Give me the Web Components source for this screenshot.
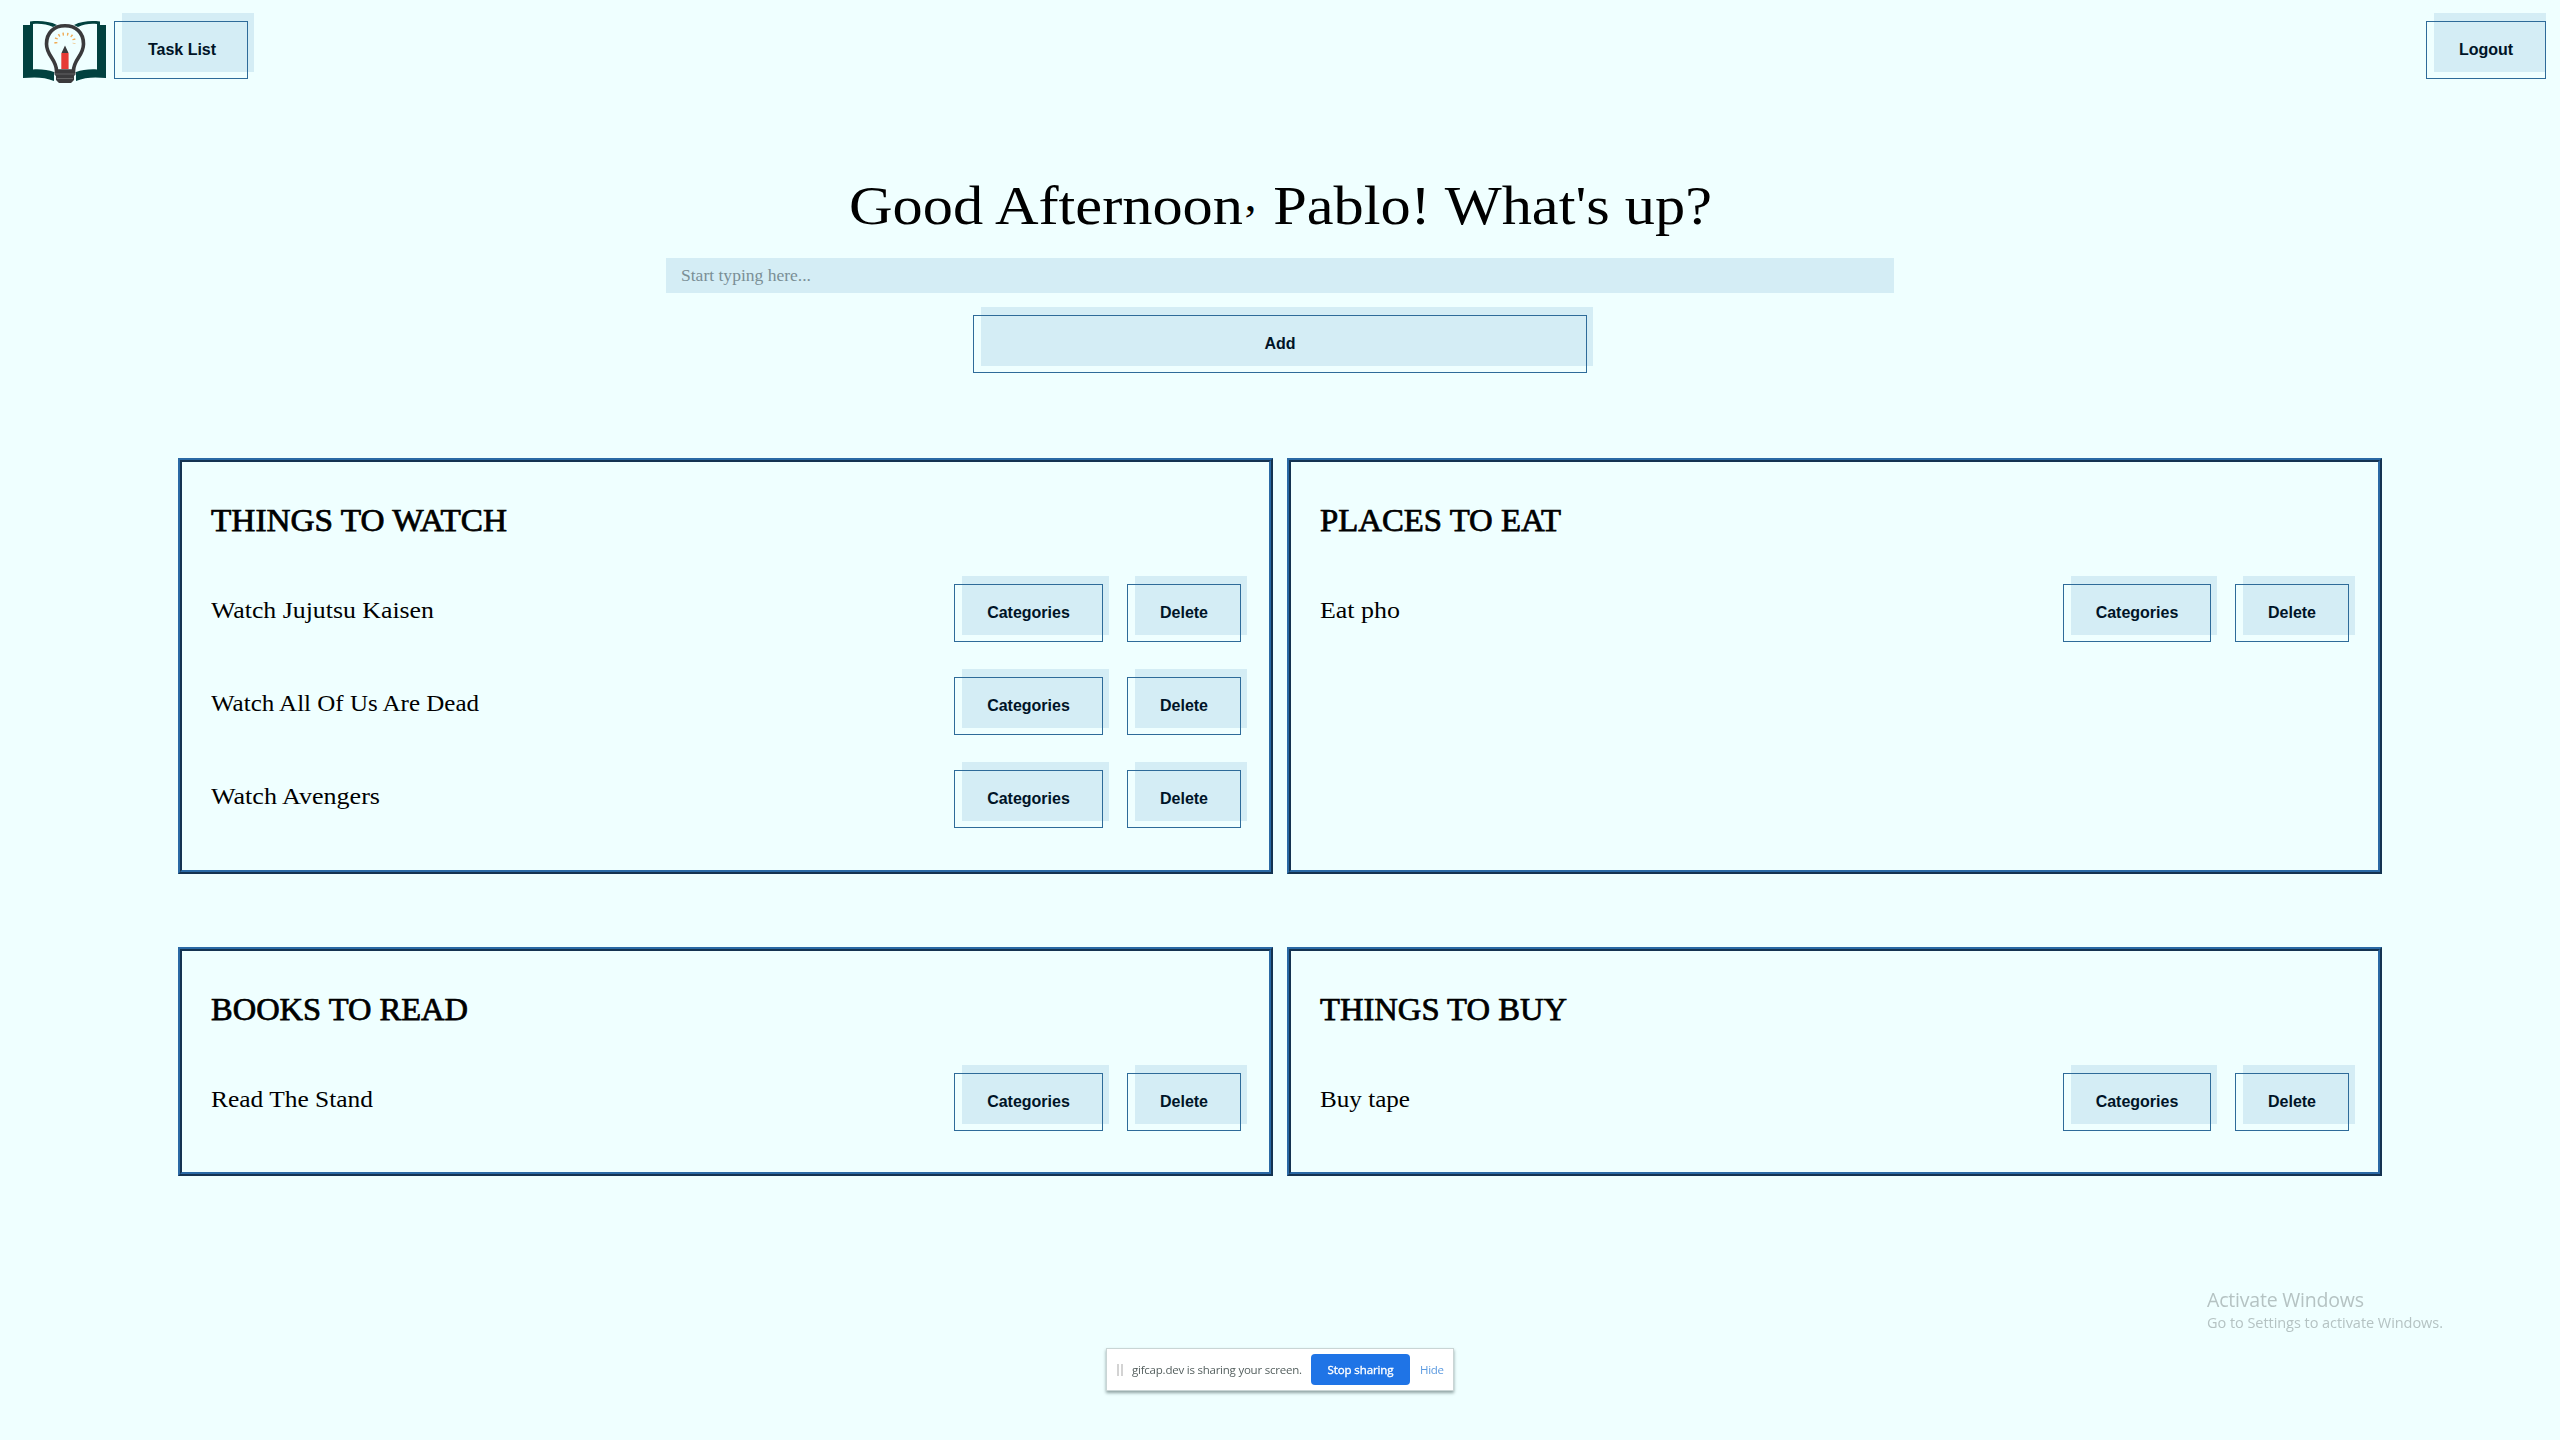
<!DOCTYPE html>
<html lang="en">
<head>
<meta charset="utf-8">
<title>Task List</title>
<style>
  html, body { margin: 0; height: 100%; }
  body { background: #efffff; color: #000; font-family: "Liberation Serif", serif; overflow: hidden; }
</style>
</head>
<body>
<task-app></task-app>
<script>
const define = (name, html, setup) => {
  const template = document.createElement('template');
  template.innerHTML = html;
  customElements.define(name, class extends HTMLElement {
    connectedCallback() {
      if (this.shadowRoot) return;
      this.attachShadow({ mode: 'open' }).append(template.content.cloneNode(true));
      if (setup) setup.call(this, this.shadowRoot);
    }
  });
};

/* Sets a single line of text to the given width: tracked, or with wider letterforms when "stretch" is set. */
define('fit-text', `
  <style>:host { display: block; white-space: nowrap; } span { display: inline-block; transform-origin: 0 50%; }</style>
  <span><slot></slot></span>`,
  function (root) {
    const span = root.querySelector('span');
    const target = +this.getAttribute('width');
    const natural = span.getBoundingClientRect().width;
    if (this.hasAttribute('stretch')) {
      this.style.width = target + 'px';
      span.style.transform = 'scaleX(' + (target / natural).toFixed(4) + ')';
    } else {
      span.style.letterSpacing = ((target - natural) / (this.textContent.length - 1)).toFixed(3) + 'px';
    }
  });

define('offset-button', `
  <style>
    :host { display: block; position: relative; box-sizing: border-box; width: var(--w); height: 58px; flex: none; }
    .fill { position: absolute; left: 8px; right: -6px; top: -8px; height: 59px; background: #d4edf5; }
    button { position: relative; display: block; box-sizing: border-box; width: 100%; height: 100%; margin: 0; padding: 0 0 1px var(--nudge, 0px);
      border: 1px solid #2e6b99; background: none; color: #001427; font: bold 16px/20px "Liberation Sans", sans-serif; }
  </style>
  <div class="fill"></div><button><slot></slot></button>`);

define('app-logo', `
  <style>:host { display: block; width: 84px; height: 64px; } svg { display: block; }</style>
  <svg width="84" height="64" viewBox="0 0 84 64">
    <path fill="#01413f" d="M0 5H7V1.500C16 .5 26 1 34 5L30 7C24 4 17 3.500 10 4V49.500C18 49 25 50 31 52V61C22 57 12 57 0 58Z"/>
    <path fill="#01413f" d="M83 5H77V1.500C68 .5 59 1 51 5L55 7C61 4 67 3.500 74 4V49.500C66 49 59 50 53 52V61C62 57 72 57 83 58Z"/>
    <path fill="#efffff" stroke="#3a3a3c" stroke-width="3.600" d="M33.500 51C33.500 39 23.500 36 23.500 24C23.500 12.500 31 5.800 42 5.800S60.500 12.500 60.500 24C60.500 36 50.500 39 50.500 51Z"/>
    <path fill="none" stroke="#f0ab55" stroke-width="3" stroke-dasharray="1.400 2.900" d="M33 23.500C32 17 36 14 42 14S52 17 51 23.500"/>
    <path fill="#e63a35" d="M38.300 33H45.600V49H38.300Z"/>
    <path fill="#3a3a3c" d="M42 25.500L45.500 33H38.500ZM31.500 52H52.500V54.500L51 56V60L48 63H36L33 60V56L31.500 54.500Z"/>
    <path stroke="#777" stroke-width=".7" d="M32 54H52M34 58.500H50"/>
  </svg>`);

define('app-header', `
  <style>
    :host { display: flex; align-items: flex-start; box-sizing: border-box; height: 100px; margin-right: 14px; padding: 20px 0 0 23px; overflow: hidden; }
    offset-button { margin-top: 1px; }
    .first { margin-left: 7px; }
    .last { margin-left: auto; }
  </style>
  <app-logo></app-logo>
  <offset-button class="first" style="--w:134px;--nudge:2px">Task List</offset-button>
  <offset-button class="last" style="--w:120px">Logout</offset-button>`);

define('task-form', `
  <style>
    :host { display: flex; flex-direction: column; align-items: center; padding-top: 76px; }
    .greet { font-size: 55px; line-height: 60px; }
    .comma { display: inline-block; transform: translateY(-9px) scale(.8); }
    .field { box-sizing: border-box; width: 1228px; height: 35px; margin: 22px 0 22px; padding-left: 14.500px; background: #d4edf5;
      color: #7a8f95; font-size: 16px; line-height: 35px; }
  </style>
  <fit-text class="greet" stretch width="863">Good Afternoon<span class="comma">,</span> Pablo! What's up?</fit-text>
  <div class="field"><fit-text stretch width="130">Start typing here...</fit-text></div>
  <offset-button style="--w:614px">Add</offset-button>`);

define('task-row', `
  <style>
    :host { display: flex; align-items: flex-start; height: 58px; margin-bottom: 35px; }
    :host(:last-of-type) { margin-bottom: 0; }
    fit-text { font-size: 24px; line-height: 52px; }
    .cat { margin-left: auto; --w: var(--cat, 149px); }
    .del { margin-left: 24px; --w: 114px; }
  </style>
  <offset-button class="cat">Categories</offset-button>
  <offset-button class="del">Delete</offset-button>`,
  function (root) {
    const text = document.createElement('fit-text');
    text.setAttribute('stretch', '');
    text.setAttribute('width', this.getAttribute('width'));
    text.textContent = this.getAttribute('label');
    root.querySelector('.cat').before(text);
  });

define('task-card', `
  <style>
    :host { display: block; box-sizing: border-box; border: 4px ridge #2a69a5; padding: 38px var(--end, 28px) 0 29px; }
    .title { font-size: 32px; line-height: 40px; margin-bottom: 44px; -webkit-text-stroke: .75px #000; }
  </style>
  <div class="title"><slot name="title"></slot></div>
  <slot></slot>`);

define('share-bar', `
  <style>
    :host { position: fixed; left: 1106px; top: 1348px; width: 348px; height: 43px; box-sizing: border-box; display: flex; align-items: center;
      border: 1px solid #c9d5d5; background: #fff; box-shadow: 0 2px 3px #8fa3a3; font-family: "Open Sans", sans-serif; font-size: 11.500px; }
    .grip { flex: none; width: 2px; height: 12px; border: solid #d3d3d3; border-width: 0 2px; margin: 0 9px 0 10px; }
    .msg { flex: none; color: #55605f; width: 170px; }
    .stop { flex: none; width: 99px; height: 31px; margin: 0 10px 0 9px; border-radius: 4px; background: #1f74e6; color: #fff; display: flex; align-items: center; justify-content: center; -webkit-text-stroke: .35px #fff; }
    .hide { color: #5b9ae0; }
  </style>
  <div class="grip"></div>
  <fit-text class="msg" width="170">gifcap.dev is sharing your screen.</fit-text>
  <div class="stop"><fit-text width="66">Stop sharing</fit-text></div>
  <fit-text class="hide" width="24">Hide</fit-text>`);

define('activation-note', `
  <style>
    :host { position: fixed; left: 2207px; top: 1286px; color: #b5c3c3; font-family: "Open Sans", sans-serif; }
    .a { font-size: 19.500px; line-height: 28px; }
    .b { font-size: 14.500px; line-height: 18px; }
  </style>
  <fit-text class="a" width="157">Activate Windows</fit-text>
  <fit-text class="b" width="236">Go to Settings to activate Windows.</fit-text>`);

define('task-app', `
  <style>
    :host { display: block; height: 100%; }
    .grid { display: grid; grid-template-columns: 1095px 1095px; grid-template-rows: 416px 229px; gap: 73px 14px; margin: 85px 0 0 178px; }
    task-card:nth-child(even) { --end: 29px; --cat: 148px; }
  </style>
  <app-header></app-header>
  <task-form></task-form>
  <main class="grid">
    <task-card><fit-text slot="title" stretch width="296">THINGS TO WATCH</fit-text>
      <task-row label="Watch Jujutsu Kaisen" width="223"></task-row>
      <task-row label="Watch All Of Us Are Dead" width="268"></task-row>
      <task-row label="Watch Avengers" width="169"></task-row></task-card>
    <task-card><fit-text slot="title" stretch width="241">PLACES TO EAT</fit-text>
      <task-row label="Eat pho" width="80"></task-row></task-card>
    <task-card><fit-text slot="title" stretch width="257">BOOKS TO READ</fit-text>
      <task-row label="Read The Stand" width="162"></task-row></task-card>
    <task-card><fit-text slot="title" stretch width="247">THINGS TO BUY</fit-text>
      <task-row label="Buy tape" width="90"></task-row></task-card>
  </main>
  <share-bar></share-bar>
  <activation-note></activation-note>`);
</script>
</body>
</html>
